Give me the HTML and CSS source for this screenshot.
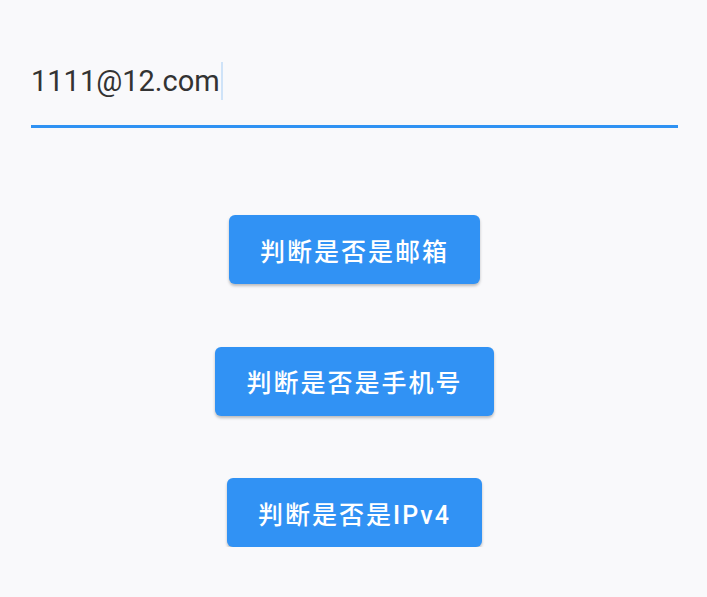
FILE: index.html
```html
<!DOCTYPE html>
<html lang="zh">
<head>
<meta charset="utf-8">
<title>Validator</title>
<link rel="stylesheet" href="styles.css">
</head>
<body>
<div class="page">
  <div class="field">
    <span class="value">1111@12.com</span><span class="cursor"></span>
  </div>
  <div class="actions">
    <button class="btn">判断是否是邮箱</button>
    <button class="btn">判断是否是手机号</button>
    <button class="btn">判断是否是IPv4</button>
  </div>
</div>
</body>
</html>
```
FILE: styles.css
```css
html, body {
  margin: 0;
  padding: 0;
  background: #f9f9fb;
}
.page {
  padding: 0 29px 0 31px;
}
.field {
  display: flex;
  align-items: center;
  height: 128px;
  box-sizing: border-box;
  padding-top: 36px;
  border-bottom: 3px solid #2f92f3;
}
.value {
  font-family: Roboto, "Noto Sans", sans-serif;
  font-size: 29px;
  color: #333333;
  line-height: 38px;
}
.cursor {
  display: inline-block;
  width: 2px;
  height: 38px;
  margin-left: 1px;
  background: #cfe3f8;
}
.actions {
  display: flex;
  flex-direction: column;
  align-items: center;
  gap: 62.5px;
  padding-top: 87px;
}
.btn {
  height: 69px;
  padding: 0 31px;
  border: none;
  border-radius: 6px;
  background: #3192f4;
  color: #ffffff;
  font-family: Roboto, "Noto Sans CJK SC", sans-serif;
  font-weight: 500;
  font-size: 25px;
  letter-spacing: 2px;
  box-shadow: 0 2px 3px rgba(0, 0, 0, 0.25);
}
```
